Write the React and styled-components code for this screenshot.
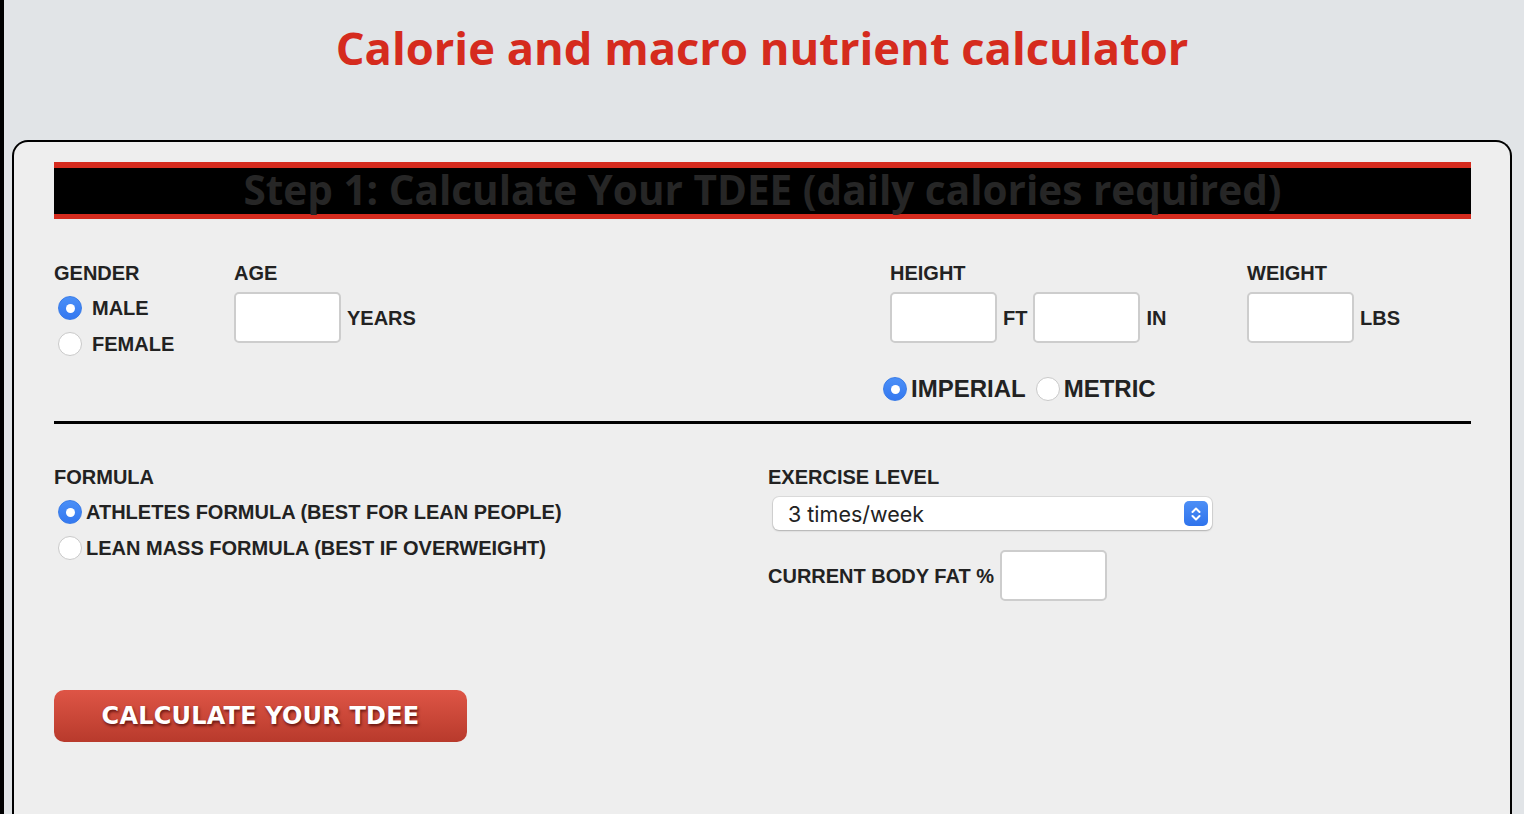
import React from "react";
import styled, { createGlobalStyle } from "styled-components";

const GlobalStyle = createGlobalStyle`
  html, body {
    margin: 0;
    padding: 0;
    background: #e1e4e7;
  }
  body {
    font-family: "Liberation Sans", Arial, sans-serif;
    overflow: hidden;
  }
`;

const Page = styled.div`
  min-height: 814px;
  border-left: 4px solid #000;
  padding: 0 12px 0 8px;
  box-sizing: border-box;
`;

const Title = styled.h1`
  margin: 0;
  padding-top: 17px;
  height: 140px;
  box-sizing: border-box;
  text-align: center;
  font-family: "Open Sans", sans-serif;
  font-weight: 700;
  font-size: 45.3px;
  color: #d52b1e;
`;

const Card = styled.div`
  background: #eeeeee;
  border: 2px solid #000;
  border-bottom: none;
  border-radius: 16px 16px 0 0;
  padding: 20px 39px 60px 40px;
  min-height: 680px;
  box-sizing: border-box;
`;

const StepBar = styled.div`
  background: #000;
  border-top: 6px solid #d52b1e;
  border-bottom: 5px solid #d52b1e;
  height: 57px;
  box-sizing: border-box;
  display: flex;
  align-items: center;
  justify-content: center;
  padding-bottom: 4px;
  font-family: "Open Sans", sans-serif;
  font-weight: 700;
  font-size: 40.5px;
  color: #262626;
`;

const TopRow = styled.div`
  display: grid;
  grid-template-columns: 180px 656px 357px 1fr;
  padding-top: 43px;
  height: 205px;
  box-sizing: border-box;
  border-bottom: 3px solid #000;
`;

const Column = styled.div`
  display: flex;
  flex-direction: column;
`;

const Label = styled.div`
  font-weight: 700;
  font-size: 20px;
  color: #222;
  text-transform: uppercase;
  line-height: 22px;
  margin-bottom: ${(p) => p.$gap ?? 8}px;
`;

const RadioRow = styled.label`
  display: flex;
  align-items: center;
  gap: ${(p) => p.$gap ?? 10}px;
  height: 36px;
  font-weight: 700;
  font-size: ${(p) => p.$size ?? 20}px;
  color: #222;
  padding-left: ${(p) => p.$indent ?? 4}px;
`;

const RadioDot = styled.span`
  width: 24px;
  height: 24px;
  border-radius: 50%;
  box-sizing: border-box;
  flex-shrink: 0;
  display: inline-flex;
  align-items: center;
  justify-content: center;
  background: ${(p) =>
    p.$on ? "linear-gradient(#4a8ff7, #3478f0)" : "#fff"};
  border: 1px solid ${(p) => (p.$on ? "#3a7ce8" : "#c9c9c9")};
  &::after {
    content: "";
    width: 9px;
    height: 9px;
    border-radius: 50%;
    background: #fff;
    display: ${(p) => (p.$on ? "block" : "none")};
  }
`;

const InputRow = styled.div`
  display: flex;
  align-items: center;
  gap: 6px;
`;

const Box = styled.div`
  width: ${(p) => p.$w ?? 107}px;
  height: 51px;
  background: #fff;
  border: 2px solid #cdcdcd;
  border-radius: 5px;
  box-sizing: border-box;
`;

const Unit = styled.span`
  font-weight: 700;
  font-size: 20px;
  color: #222;
  padding-top: 2px;
`;

const UnitToggle = styled.div`
  display: flex;
  align-items: center;
  margin-top: 28px;
  margin-left: -7px;
`;

const BottomRow = styled.div`
  display: grid;
  grid-template-columns: 714px 1fr;
  padding-top: 42px;
`;

const Select = styled.div`
  width: 439px;
  height: 33px;
  margin-left: 5px;
  background: #fff;
  border-radius: 6px;
  box-shadow: 0 0 0 1px rgba(0, 0, 0, 0.08), 0 1px 2px rgba(0, 0, 0, 0.2);
  display: flex;
  align-items: center;
  justify-content: space-between;
  padding: 0 4px 0 15px;
  box-sizing: border-box;
  font-family: "Inter", "Liberation Sans", sans-serif;
  font-size: 21.5px;
  color: #222;
`;

const Stepper = styled.span`
  width: 24px;
  height: 25px;
  border-radius: 5px;
  background: linear-gradient(#4d8ff6, #2f73ec);
  display: inline-flex;
  align-items: center;
  justify-content: center;
`;

const FatRow = styled.div`
  display: flex;
  align-items: center;
  gap: 6px;
  margin-top: 20px;
`;

const CalcButton = styled.button`
  display: block;
  margin-top: 89px;
  width: 413px;
  height: 52px;
  border: none;
  border-radius: 10px;
  background: linear-gradient(#de5546, #b83a2c);
  color: #fff;
  font-family: "DejaVu Sans", Verdana, sans-serif;
  font-weight: 700;
  font-size: 24px;
  letter-spacing: 0.2px;
  text-shadow: 1px 2px 3px rgba(60, 0, 0, 0.7);
  cursor: pointer;
`;

function Radio({ on, children, ...rest }) {
  return (
    <RadioRow {...rest}>
      <RadioDot $on={on} />
      {children}
    </RadioRow>
  );
}

export default function App() {
  return (
    <>
      <GlobalStyle />
      <Page>
        <Title>Calorie and macro nutrient calculator</Title>
        <Card>
          <StepBar>Step 1: Calculate Your TDEE (daily calories required)</StepBar>
          <TopRow>
            <Column>
              <Label $gap={6}>Gender</Label>
              <Radio on>MALE</Radio>
              <Radio>FEMALE</Radio>
            </Column>
            <Column>
              <Label>Age</Label>
              <InputRow>
                <Box />
                <Unit>YEARS</Unit>
              </InputRow>
            </Column>
            <Column>
              <Label>Height</Label>
              <InputRow>
                <Box />
                <Unit>FT</Unit>
                <Box />
                <Unit>IN</Unit>
              </InputRow>
              <UnitToggle>
                <Radio on $size={24} $gap={4} $indent={0}>
                  IMPERIAL
                </Radio>
                <Radio $size={24} $gap={4} $indent={10}>
                  METRIC
                </Radio>
              </UnitToggle>
            </Column>
            <Column>
              <Label>Weight</Label>
              <InputRow>
                <Box />
                <Unit>LBS</Unit>
              </InputRow>
            </Column>
          </TopRow>
          <BottomRow>
            <Column>
              <Label $gap={6}>Formula</Label>
              <Radio on $gap={4}>
                ATHLETES FORMULA (BEST FOR LEAN PEOPLE)
              </Radio>
              <Radio $gap={4}>LEAN MASS FORMULA (BEST IF OVERWEIGHT)</Radio>
            </Column>
            <Column>
              <Label $gap={9}>Exercise level</Label>
              <Select>
                <span>3 times/week</span>
                <Stepper>
                  <svg width="12" height="16" viewBox="0 0 12 16" fill="none">
                    <path
                      d="M2.5 6 L6 2.5 L9.5 6 M2.5 10 L6 13.5 L9.5 10"
                      stroke="#fff"
                      strokeWidth="2"
                      strokeLinecap="round"
                      strokeLinejoin="round"
                    />
                  </svg>
                </Stepper>
              </Select>
              <FatRow>
                <Unit>CURRENT BODY FAT %</Unit>
                <Box $w={107} />
              </FatRow>
            </Column>
          </BottomRow>
          <CalcButton>CALCULATE YOUR TDEE</CalcButton>
        </Card>
      </Page>
    </>
  );
}
